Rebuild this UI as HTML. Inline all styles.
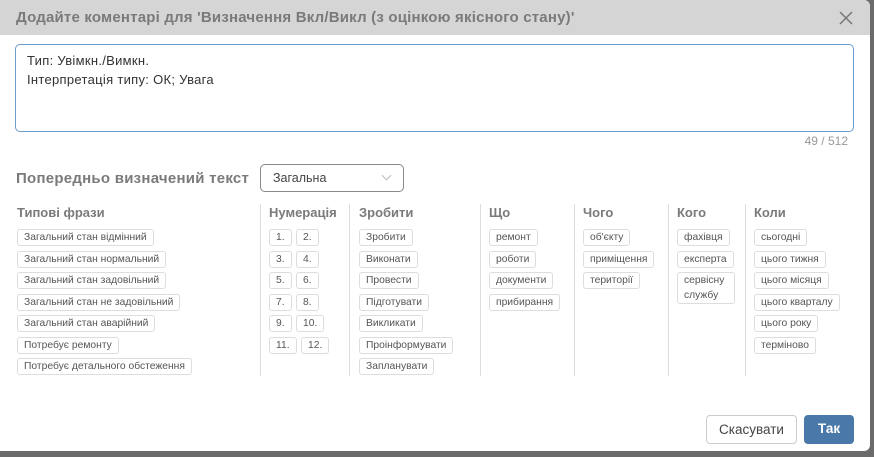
<!DOCTYPE html>
<html><head><meta charset="utf-8"><style>
*{box-sizing:border-box;margin:0;padding:0}
body{width:874px;height:457px;background:#6b6b6b;font-family:"Liberation Sans",sans-serif;position:relative;overflow:hidden}
.dlg{position:absolute;left:0;top:0;width:870px;height:451px;background:#fff;border-radius:0 6px 6px 0;overflow:hidden}
.hdr{position:absolute;left:0;top:0;width:870px;height:35px;background:#d5d5d5;border-radius:0 6px 0 0}
.ttl{position:absolute;left:16px;top:9px;font-size:15px;letter-spacing:0.2px;font-weight:bold;color:#7a7a7a}
.x{position:absolute;left:839px;top:11px}
.ta{position:absolute;left:15px;top:44px;width:839px;height:88px;border:1px solid #6d9ccc;border-radius:5px;padding:6px 11px;font-size:13px;letter-spacing:0.3px;line-height:19px;color:#333}
.cnt{position:absolute;right:22px;top:134px;font-size:12px;color:#999}
.lbl{position:absolute;left:16px;top:170px;font-size:15px;letter-spacing:0.25px;font-weight:bold;color:#7a7a7a}
.sel{position:absolute;left:260px;top:164px;width:144px;height:28px;border:1px solid #888;border-radius:5px;font-size:12.5px;color:#444;padding:6px 12px}
.sel:after{content:"";position:absolute;right:13px;top:7px;width:6px;height:6px;border-right:1px solid #bbb;border-bottom:1px solid #bbb;transform:rotate(45deg)}
.col{position:absolute;top:204px}
.col h{display:block;font-size:13px;font-weight:bold;color:#7a7a7a;height:25px;padding-top:1px}
.c{display:inline-block;height:17px;border:1px solid #ddd;border-radius:3px;font-size:10.3px;line-height:15px;color:#555;padding:0 6px;margin-bottom:4.5px;white-space:nowrap;vertical-align:top}
.sep{position:absolute;top:204px;width:1px;height:172px;background:#ddd}
.btn{position:absolute;top:415px;height:29px;border-radius:4px;font-size:13.5px;line-height:27px;text-align:center}
</style></head><body>
<div class="dlg">
<div class="hdr"><div class="ttl">Додайте коментарі для 'Визначення Вкл/Викл (з оцінкою якісного стану)'</div><svg class="x" width="14" height="14"><path d="M1 1L13 13M13 1L1 13" stroke="#777" stroke-width="1.5"/></svg></div>
<div class="ta">Тип: Увімкн./Вимкн.<br>Інтерпретація типу: ОК; Увага</div>
<div class="cnt">49 / 512</div>
<div class="lbl">Попередньо визначений текст</div>
<div class="sel">Загальна</div>
<div class="sep" style="left:260px"></div><div class="sep" style="left:349px"></div><div class="sep" style="left:480px"></div><div class="sep" style="left:574px"></div><div class="sep" style="left:668px"></div><div class="sep" style="left:745px"></div>
<div class="col" style="left:17px;width:240px"><h>Типові фрази</h>
<span class="c">Загальний стан відмінний</span><br><span class="c">Загальний стан нормальний</span><br><span class="c">Загальний стан задовільний</span><br><span class="c">Загальний стан не задовільний</span><br><span class="c">Загальний стан аварійний</span><br><span class="c">Потребує ремонту</span><br><span class="c">Потребує детального обстеження</span></div>
<div class="col" style="left:269px;width:80px"><h>Нумерація</h>
<span class="c">1.</span> <span class="c">2.</span><br><span class="c">3.</span> <span class="c">4.</span><br><span class="c">5.</span> <span class="c">6.</span><br><span class="c">7.</span> <span class="c">8.</span><br><span class="c">9.</span> <span class="c">10.</span><br><span class="c">11.</span> <span class="c">12.</span></div>
<div class="col" style="left:359px;width:120px"><h>Зробити</h>
<span class="c">Зробити</span><br><span class="c">Виконати</span><br><span class="c">Провести</span><br><span class="c">Підготувати</span><br><span class="c">Викликати</span><br><span class="c">Проінформувати</span><br><span class="c">Запланувати</span></div>
<div class="col" style="left:489px"><h>Що</h>
<span class="c">ремонт</span><br><span class="c">роботи</span><br><span class="c">документи</span><br><span class="c">прибирання</span></div>
<div class="col" style="left:583px"><h>Чого</h>
<span class="c">об'єкту</span><br><span class="c">приміщення</span><br><span class="c">території</span></div>
<div class="col" style="left:677px"><h>Кого</h>
<span class="c">фахівця</span><br><span class="c">експерта</span><br><span class="c" style="height:32px;line-height:15px;white-space:normal;width:58px">сервісну службу</span></div>
<div class="col" style="left:754px"><h>Коли</h>
<span class="c">сьогодні</span><br><span class="c">цього тижня</span><br><span class="c">цього місяця</span><br><span class="c">цього кварталу</span><br><span class="c">цього року</span><br><span class="c">терміново</span></div>
<div class="btn" style="left:706px;width:91px;border:1px solid #ccc;color:#444">Скасувати</div>
<div class="btn" style="left:804px;width:50px;background:#4a78a8;color:#fff;font-weight:bold">Так</div>
</div>
</body></html>
